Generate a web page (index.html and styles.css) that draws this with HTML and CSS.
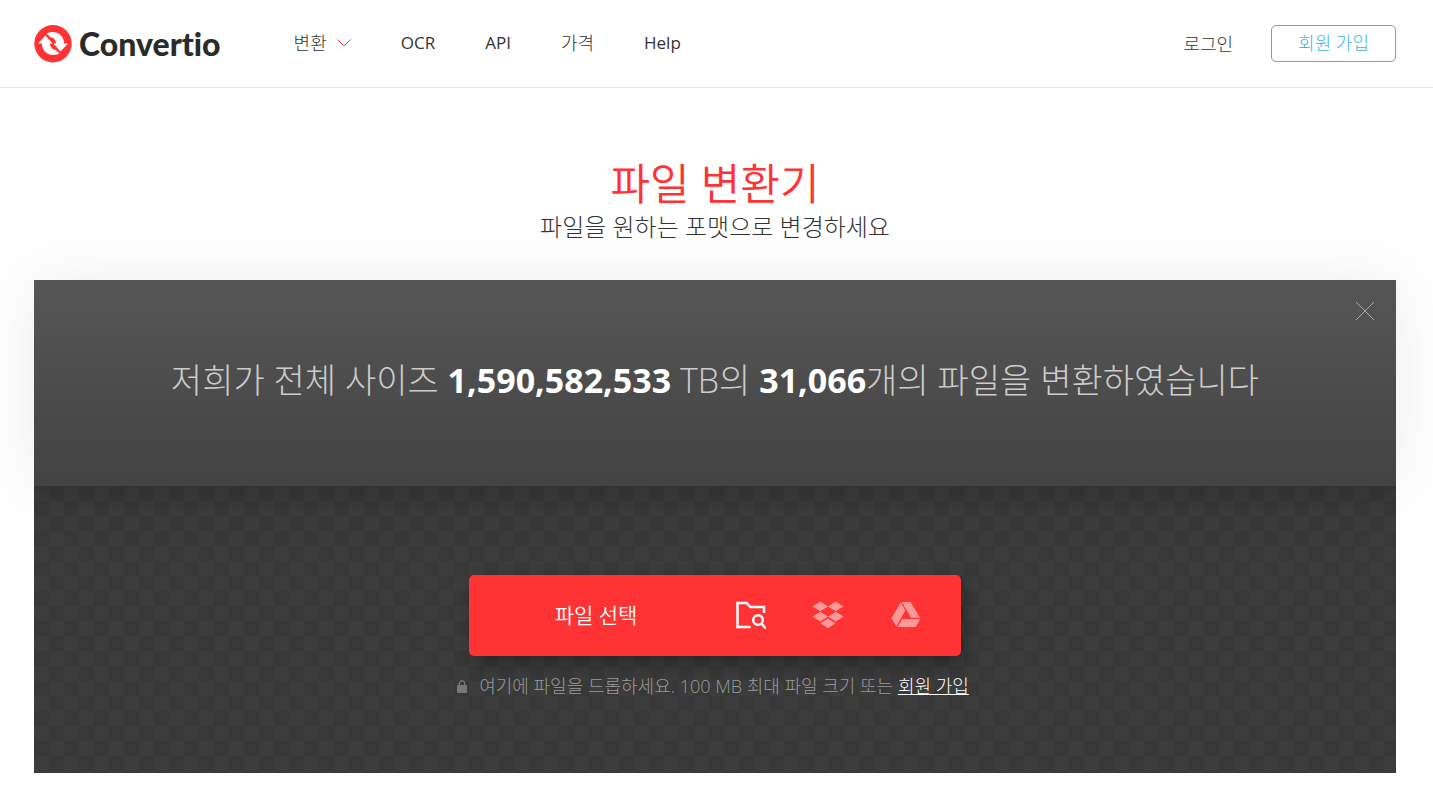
FILE: index.html
```
<!DOCTYPE html>
<html lang="ko">
<head>
    <meta charset="UTF-8">
    <meta name="viewport" content="width=device-width, initial-scale=1">
    <title>파일 변환기 - Convertio</title>
    <link rel="stylesheet" href="styles.css">
</head>
<body>
<header class="header">
    <a href="#" class="logo">
        <svg class="logo-icon" viewBox="0 0 38 38" aria-hidden="true">
            <circle cx="19" cy="18.700" r="18.700" fill="#ff3333"/>
            <path d="M4 18.500 L11.500 10.500 L18.500 18.500 H15.800 C16.400 22 18.500 24.800 21.500 24.800 L25.500 28.600 C17 32.500 8.300 28 7.800 18.500 Z" fill="#fff"/>
            <path d="M34 18.500 L26.500 26.500 L19.500 18.500 H22.200 C21.600 15 19.500 12.200 16.500 12.200 L12.500 8.400 C21 4.500 29.700 9 30.200 18.500 Z" fill="#fff"/>
        </svg>
        <span>Convertio</span>
    </a>
    <nav class="menu">
        <a href="#" class="menu-drop">변환
            <svg class="chevron" viewBox="0 0 14 8" aria-hidden="true"><path d="M.5 .5 L7 7 L13.500 .5"/></svg>
        </a>
        <a href="#" class="latin">OCR</a>
        <a href="#" class="latin">API</a>
        <a href="#">가격</a>
        <a href="#" class="latin">Help</a>
    </nav>
    <div class="user">
        <a href="#">로그인</a>
        <a href="#" class="btn-signup">회원 가입</a>
    </div>
</header>

<main class="main">
    <h1 class="title">파일 변환기</h1>
    <p class="subtitle">파일을 원하는 포맷으로 변경하세요</p>

    <section class="converter">
        <div class="stats">
            <p>저희가 전체 사이즈 <b>1,590,582,533</b> TB의 <b>31,066</b>개의 파일을 변환하였습니다</p>
            <button type="button" class="btn-close" aria-label="닫기">
                <svg viewBox="0 0 18 18" aria-hidden="true"><path d="M0 0 L18 18 M18 0 L0 18"/></svg>
            </button>
        </div>
        <div class="upload">
            <div class="picker">
                <button type="button" class="btn-choose">파일 선택</button>
                <button type="button" class="btn-source" aria-label="내 컴퓨터">
                    <svg viewBox="0 0 32 28" fill="none" stroke="#fff" stroke-width="2.500" aria-hidden="true">
                        <path d="M16.500 26 H3.500 V2 H12.500 L16.500 6 H30 V12"/>
                        <circle cx="24" cy="19" r="4.800"/>
                        <path d="M27.300 22.300 L32 27.500"/>
                    </svg>
                </button>
                <button type="button" class="btn-source" aria-label="Dropbox">
                    <svg viewBox="0 0 32 28" fill="#ff9999" aria-hidden="true">
                        <path d="M8.300 .5 L16 5.400 L8.300 10.300 L.5 5.400 Z"/>
                        <path d="M23.700 .5 L31.500 5.400 L23.700 10.300 L16 5.400 Z"/>
                        <path d="M8.300 10.700 L16 15.600 L8.300 20.500 L.5 15.600 Z"/>
                        <path d="M23.700 10.700 L31.500 15.600 L23.700 20.500 L16 15.600 Z"/>
                        <path d="M16 17.400 L23.500 22.300 L16 27.300 L8.500 22.300 Z"/>
                    </svg>
                </button>
                <button type="button" class="btn-source" aria-label="Google Drive">
                    <svg viewBox="0 0 32 28" fill="#ff9999" aria-hidden="true">
                        <path d="M10.700 1.500 L15.300 9.500 L6.400 25.500 L1.500 17.300 Z"/>
                        <path d="M11.800 1 H20.600 L30 16.800 H21 Z"/>
                        <path d="M12.200 18 H30.500 L25.600 26 H7.600 Z"/>
                    </svg>
                </button>
            </div>
            <p class="hint">
                <svg class="lock" viewBox="0 0 10 13" aria-hidden="true">
                    <path d="M2.300 6 V3.500 A2.700 2.700 0 0 1 7.700 3.500 V6" fill="none" stroke="#777" stroke-width="1.300"/>
                    <rect y="5" width="10" height="8" rx="1" fill="#777"/>
                </svg>
                <span>여기에 파일을 드롭하세요. 100 MB 최대 파일 크기 또는 <a href="#">회원 가입</a></span>
            </p>
        </div>
    </section>
</main>
</body>
</html>
```
FILE: styles.css
```
*{
    box-sizing: border-box;
}
body{
    margin: 0;
    background-color: white;
    color: #333;
    font-family: "Open Sans", "Noto Sans CJK KR", sans-serif;
    font-size: 18px;
    font-weight: 400;
}
a{
    color: inherit;
    text-decoration: none;
}
p, h1{
    margin: 0;
}
button{
    padding: 0;
    border: 0;
    background: none;
    font: inherit;
    cursor: pointer;
}
svg{
    display: block;
}
.header{
    display: flex;
    align-items: center;
    height: 88px;
    padding: 0 37px 0 34px;
    border-bottom: 1px solid #e5e5e5;
    font-weight: 300;
    line-height: 24px;
}
.logo{
    display: flex;
    align-items: center;
    gap: 7px;
    color: #2b2b2b;
    font-family: Lato, sans-serif;
    font-size: 32px;
    font-variant-ligatures: none;
    font-weight: 900;
}
.logo-icon{
    width: 38px;
    height: 38px;
}
.menu{
    display: flex;
    gap: 50px;
    margin-left: 73px;
    padding-bottom: 2px;
}
.menu-drop{
    display: flex;
    align-items: center;
    gap: 10px;
}
.latin{
    font-size: 17px;
    font-weight: 400;
}
.chevron{
    width: 14px;
    height: 8px;
    fill: none;
    stroke: #ff3333;
}
.user{
    display: flex;
    align-items: center;
    gap: 38px;
    margin-left: auto;
}
.btn-signup{
    padding: 5px 26px 6px;
    border: 1px solid #3db5e6;
    border-radius: 5px;
    color: #3db5e6;
}
.main{
    padding: 68px 37px 29px 34px;
}
.title{
    color: #ff3333;
    font-size: 43px;
    font-weight: 350;
    line-height: 56px;
    text-align: center;
}
.subtitle{
    font-size: 24px;
    font-weight: 300;
    line-height: 30px;
    text-align: center;
}
.converter{
    margin-top: 38px;
    background-color: #3c3c3c;
}
.stats{
    position: relative;
    padding: 76px 80px 82px;
    background-image: linear-gradient(#565656, #434343);
    box-shadow: 0 0 60px rgba(0, 0, 0, 0.08);
    color: #ccc;
    font-size: 34px;
    font-weight: 300;
    line-height: 48px;
    text-align: center;
}
.stats b{
    color: white;
    font-weight: 700;
}
.btn-close{
    position: absolute;
    top: 22px;
    right: 22px;
}
.btn-close svg{
    width: 18px;
    height: 18px;
    stroke: #aaa;
}
.upload{
    display: flex;
    flex-direction: column;
    align-items: center;
    padding: 89px 20px 72px;
    background-image:
        linear-gradient(rgba(0, 0, 0, 0.1), transparent 30px),
        conic-gradient(#383838 25%, #3c3c3c 0 50%, #383838 0 75%, #3c3c3c 0);
    background-size: 100% 100%, 30px 30px;
}
.picker{
    display: flex;
    width: 492px;
    max-width: 100%;
    height: 81px;
    padding-right: 16px;
    border-radius: 5px;
    background-color: #ff3333;
    box-shadow: 4px 8px 18px rgba(0, 0, 0, 0.3);
}
.btn-choose{
    flex: 1;
    padding: 0 0 4px 12px;
    color: white;
    font-size: 21px;
    font-weight: 350;
}
.btn-source{
    display: flex;
    align-items: center;
    justify-content: center;
    width: 78px;
    padding-bottom: 2px;
}
.btn-source svg{
    width: 32px;
    height: 28px;
}
.hint{
    display: flex;
    align-items: center;
    gap: 12px;
    margin-top: 16px;
    margin-bottom: 1px;
    padding-right: 4px;
    color: #999;
    font-weight: 300;
    line-height: 28px;
}
.hint a{
    color: white;
    text-decoration: underline;
}
.lock{
    width: 10px;
    height: 13px;
}
```
